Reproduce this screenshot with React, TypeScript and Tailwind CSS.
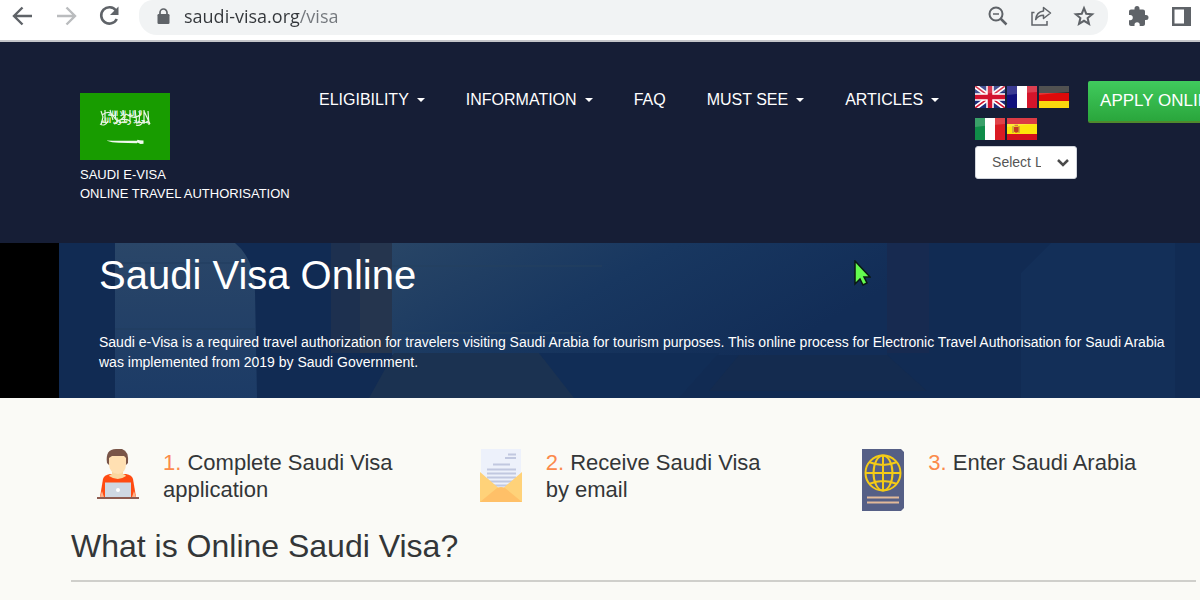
const navItems = [
  { label: 'ELIGIBILITY', menu: true },
  { label: 'INFORMATION', menu: true },
  { label: 'FAQ', menu: false },
  { label: 'MUST SEE', menu: true },
  { label: 'ARTICLES', menu: true }
]

const ArrowIcon = ({ flip = false }: { flip?: boolean }) => (
  <svg width="28" height="28" viewBox="0 0 28 28" fill="none" stroke="currentColor" strokeWidth="2.400">
    <path d={flip ? 'M5 14h17M14.500 5.500 23 14l-8.500 8.500' : 'M23 14H6M13.500 5.500 5 14l8.500 8.500'} />
  </svg>
)

const ReloadIcon = () => (
  <svg width="28" height="28" viewBox="0 0 28 28">
    <path d="M21 8.500A8.200 8.200 0 1 0 21.800 17" fill="none" stroke="currentColor" strokeWidth="2.600" />
    <path d="M23.500 4.500v8.500H15z" fill="currentColor" />
  </svg>
)

const LockIcon = () => (
  <svg width="17" height="17" viewBox="0 0 17 17" className="shrink-0">
    <path d="M5 7V4.500a3.500 3.500 0 0 1 7 0V7" fill="none" stroke="#5f6368" strokeWidth="1.700" />
    <rect x="2.500" y="6" width="12" height="10" rx="1.200" fill="#5f6368" />
  </svg>
)

const ZoomOutIcon = () => (
  <svg width="24" height="24" viewBox="0 0 24 24" fill="none" stroke="#5f6368">
    <circle cx="10" cy="10" r="6.500" strokeWidth="2" />
    <path d="M7 10h6" strokeWidth="1.500" />
    <path d="M14.500 14.500l6 6" strokeWidth="2.500" />
  </svg>
)

const ShareIcon = () => (
  <svg width="22" height="22" viewBox="0 0 22 22" fill="none" stroke="#5f6368" strokeWidth="1.500">
    <path d="M4.500 7.500H2V20h15v-4" />
    <path d="M13.500 2.500 20.500 8l-7 5.500v-3.200c-3.600 0-6 1.200-7.800 4.200.4-5 3.200-8 7.800-8.600z" strokeLinejoin="round" />
  </svg>
)

const StarIcon = () => (
  <svg width="24" height="24" viewBox="0 0 24 24" fill="none" stroke="#5f6368" strokeWidth="2">
    <path d="M12 4.200l2.200 5.500 6 .5-4.600 3.900 1.400 5.800-5-3.100-5 3.100 1.400-5.800-4.600-3.900 6-.5z" />
  </svg>
)

const PuzzleIcon = () => (
  <svg width="24" height="24" viewBox="0 0 24 24" fill="#5f6368">
    <path d="M20 11h-1V7.500c0-1.100-.9-2-2-2h-3.500V4.500a2.500 2.500 0 0 0-5 0v1H5c-1.100 0-2 .9-2 2V11h1.200a2.600 2.600 0 0 1 0 5.200H3V20c0 1.100.9 2 2 2h3.500v-1.200a2.600 2.600 0 0 1 5.200 0V22H17c1.100 0 2-.9 2-2v-4h1a2.500 2.500 0 0 0 0-5z" />
  </svg>
)

const PanelIcon = () => (
  <svg width="19" height="19" viewBox="0 0 19 19">
    <path d="M0 0h19v19H0z" fill="#5f6368" />
    <path d="M2.500 2.500h9.500v14H2.500z" fill="#fff" />
  </svg>
)

const Toolbar = () => (
  <div className="flex h-[42px] items-start border-b-2 border-[#c4c5ca] bg-white px-[9px] text-[#5f6368]">
    <div className="flex gap-[15px] pt-[2px]">
      <button aria-label="Back"><ArrowIcon /></button>
      <button aria-label="Forward" className="text-[#babcbe]"><ArrowIcon flip /></button>
      <button aria-label="Reload"><ReloadIcon /></button>
    </div>
    <div className="ml-4 flex h-[35px] flex-1 items-center rounded-b-[18px] rounded-t-[14px] bg-[#f1f3f4] pb-[3px] pl-4 pr-3">
      <LockIcon />
      <input
        aria-label="Address"
        className="ml-3 min-w-0 flex-1 bg-[linear-gradient(90deg,#33363a_116px,#73777c_116px)] bg-clip-text font-['Open_Sans',sans-serif] text-[18px] leading-6 text-transparent outline-none"
        defaultValue="saudi-visa.org/visa"
      />
      <div className="flex items-center gap-5">
        <button aria-label="Zoom out"><ZoomOutIcon /></button>
        <button aria-label="Share"><ShareIcon /></button>
        <button aria-label="Bookmark"><StarIcon /></button>
      </div>
    </div>
    <div className="ml-[18px] flex items-center gap-[22px] pt-1">
      <button aria-label="Extensions"><PuzzleIcon /></button>
      <button aria-label="Side panel"><PanelIcon /></button>
    </div>
  </div>
)

const SaudiFlag = () => (
  <svg width="90" height="67" viewBox="0 0 90 67" className="block">
    <path d="M0 0h90v67H0z" fill="#189c00" />
    <g fill="#fff" stroke="#fff" strokeWidth=".2" textAnchor="middle" fontFamily="DejaVu Sans, sans-serif" fontSize="7">
      <text x="45" y="23">لا إله إلا الله</text>
      <text x="45" y="30">محمد رسول الله</text>
    </g>
    <path
      d="M21 18l2 6-2 8M25 17v12M20 31q5 3 8-3M30 17l3 10M36 18q-2 7 2 11M43 17l2 13M50 17v12M55 17l2 14M60 17l-1 13M64 17v14M68 18l1 14M64 18l6 13M56 32q5 2 8-5M22 22q8-6 12 2t12-3M34 31q9-8 16-3M46 21q8 6 14 1"
      fill="none" stroke="#e6f6e2" strokeWidth="1.200"
    />
    <path d="M27 47.500l6 .2h24l.5-1 2 .6 4 .2v3.200l-3 .2-3-1.300-.5.700-18-.6c-5 0-9-.8-12-2z" fill="#f1f9ef" />
  </svg>
)

const Gloss = () => <path d="M0 0h30v6Q15 7 0 9z" fill="#fff" opacity=".18" />

const UkFlag = () => (
  <svg width="30" height="22" viewBox="0 0 30 22">
    <path d="M0 0h30v22H0z" fill="#1b2a78" />
    <path d="M0 0l30 22M30 0L0 22" stroke="#fff" strokeWidth="5" />
    <path d="M0 0l30 22M30 0L0 22" stroke="#d2122e" strokeWidth="1.600" />
    <path d="M15 0v22M0 11h30" stroke="#fff" strokeWidth="7.500" />
    <path d="M15 0v22M0 11h30" stroke="#d2122e" strokeWidth="4.500" />
    <Gloss />
  </svg>
)

const Tricolour = ({ colours }: { colours: string[] }) => (
  <svg width="30" height="22" viewBox="0 0 30 22">
    {colours.map((c, i) => (
      <rect key={c} x={i * 10} width="10" height="22" fill={c} />
    ))}
    <Gloss />
  </svg>
)

const GermanFlag = () => (
  <svg width="30" height="22" viewBox="0 0 30 22">
    <path d="M0 0h30v8H0z" fill="#2b2b2b" />
    <path d="M0 7h30v8H0z" fill="#dd0a0a" />
    <path d="M0 15h30v7H0z" fill="#fbd80e" />
    <Gloss />
  </svg>
)

const SpanishFlag = () => (
  <svg width="30" height="22" viewBox="0 0 30 22">
    <path d="M0 0h30v22H0z" fill="#d5101c" />
    <path d="M0 6h30v10H0z" fill="#fde50b" />
    <path d="M6 8v7M12 8v7" stroke="#b98a4c" strokeWidth="1.200" />
    <path d="M7 9h4.500v4.500q-2.200 2.500-4.500 0z" fill="#c33a25" />
    <path d="M7.500 7.500h3.500" stroke="#c8642a" strokeWidth="1.500" />
    <Gloss />
  </svg>
)

const languages = [
  { name: 'English', flag: <UkFlag /> },
  { name: 'French', flag: <Tricolour colours={['#10107c', '#ffffff', '#d5152b']} /> },
  { name: 'German', flag: <GermanFlag /> },
  { name: 'Italian', flag: <Tricolour colours={['#0f8c48', '#fffffe', '#da1b22']} /> },
  { name: 'Spanish', flag: <SpanishFlag /> }
]

const Header = () => (
  <header className="flex items-start overflow-hidden bg-[#161e36] pb-10 pl-20 pt-[39px] text-white">
    <a href="#home" className="mt-3 block w-[239px] shrink-0 text-[13px] leading-[19px]">
      <SaudiFlag />
      <span className="mt-[5px] block whitespace-nowrap">SAUDI E-VISA</span>
      <span className="block whitespace-nowrap">ONLINE TRAVEL AUTHORISATION</span>
    </a>
    <nav className="mt-[7px] flex shrink-0 gap-[41px]">
      {navItems.map((item) => (
        <a key={item.label} href="#menu" className="flex items-center gap-2 whitespace-nowrap text-base">
          {item.label}
          {item.menu && <span className="border-x-4 border-t-4 border-x-transparent border-t-white" />}
        </a>
      ))}
    </nav>
    <div className="ml-9 mt-[5px] w-[102px] shrink-0">
      <div className="flex flex-wrap gap-x-[2px] gap-y-[10px]">
        {languages.map((lang) => (
          <a key={lang.name} href="#language" aria-label={lang.name}>{lang.flag}</a>
        ))}
      </div>
      <div className="relative mt-[6px]">
        <select
          aria-label="Select Language"
          className="block h-[33px] w-full appearance-none rounded-[3px] border border-gray-300 bg-white pl-4 pr-[35px] text-[14px] text-[#555]"
        >
          <option>Select Language</option>
        </select>
        <svg className="pointer-events-none absolute right-2 top-3" width="12" height="10" viewBox="0 0 12 10">
          <path d="M1 2l5 5 5-5" fill="none" stroke="#4a4a4a" strokeWidth="2.500" />
        </svg>
      </div>
    </div>
    <button className="ml-[11px] h-[42px] shrink-0 whitespace-nowrap rounded-[2px] border-b-2 border-[#4f8a2c] bg-gradient-to-b from-[#40cb5d] to-[#2aa63c] px-3 text-[17px]">
      APPLY ONLINE
    </button>
  </header>
)

const HeroBackdrop = () => (
  <svg className="absolute inset-0 h-full w-full" viewBox="0 0 1141 155" preserveAspectRatio="none">
    <defs>
      <linearGradient id="stone" x1="0" y1="0" x2="0" y2="1">
        <stop offset="0" stopColor="#2a4668" />
        <stop offset="1" stopColor="#1c3b66" />
      </linearGradient>
      <linearGradient id="wall" x1="0" y1="0" x2="1" y2=".4">
        <stop offset="0" stopColor="#284566" />
        <stop offset=".5" stopColor="#183760" />
        <stop offset="1" stopColor="#122d57" />
      </linearGradient>
    </defs>
    <path d="M0 0h1141v155H0z" fill="#112b53" />
    <path d="M56 0h120q20 16 20 50l2 105H56z" fill="url(#stone)" />
    <path d="M56 86h140M56 20h132" stroke="#203c5e" />
    <path d="M272 0h60v110h-60z" fill="#1d304f" />
    <path d="M301 0h32v110h-32z" fill="#25354e" />
    <path d="M333 0h495v112H333z" fill="url(#wall)" />
    <path d="M333 23h210M333 90h190" stroke="#25405f" />
    <path d="M335 110h145l38 45H310z" fill="#1b3251" />
    <path d="M480 110h180l-40 45H515z" fill="#112d56" />
    <path d="M680 112h148l40 36H650z" fill="#142b4f" />
    <path d="M828 0h42v110h-42z" fill="#172a50" />
    <path d="M962 155V30l30-30h124v155z" fill="#132f58" />
  </svg>
)

const Hero = () => (
  <section className="flex bg-black pl-[59px] text-white">
    <div className="relative flex-1 overflow-hidden">
      <HeroBackdrop />
      <div className="relative pb-[26px] pl-10 pr-6 pt-2">
        <h1 className="text-[40px] leading-[48px]">Saudi Visa Online</h1>
        <p className="mt-[33px] text-[14px] leading-5">
          Saudi e-Visa is a required travel authorization for travelers visiting Saudi Arabia for tourism purposes. This online process for Electronic Travel Authorisation for Saudi Arabia was implemented from 2019 by Saudi Government.
        </p>
      </div>
      <svg className="absolute left-[795px] top-[17px]" width="17" height="26" viewBox="0 0 17 26">
        <path d="M1 1v23l5-5 3 6 4-2-3-6h6z" fill="#63fb4f" stroke="#0a1a12" strokeWidth="1.500" />
      </svg>
    </div>
  </section>
)

const PersonIcon = () => (
  <svg width="42" height="51" viewBox="0 0 42 51">
    <path d="M3 48 6 30q1-4 7-5h16q6 1 7 5l3 18z" fill="#ff4b12" />
    <path d="M3 48 5 42l2 6zM39 48l-2-6-2 6z" fill="#fdb28a" />
    <path d="M15 20h11v5q3 1 3 2-8 6-17 0 0-1 3-2z" fill="#fbd7a0" />
    <path d="M10 14Q8 0 19 0h6q7 2 6 14l-2 2H12z" fill="#795548" />
    <path d="M12 9l3-2h12l2 2v6q0 9-8 10-9-1-9-10z" fill="#ffe0b2" />
    <path d="M8 33.500h26V48H8z" fill="#cfd8e3" />
    <circle cx="21" cy="41" r="2" fill="#fff" />
    <path d="M0 48h42v2H0z" fill="#8d5b50" />
  </svg>
)

const MailIcon = () => (
  <svg width="42" height="54" viewBox="0 0 42 54">
    <path d="M1 0h40v50H1z" fill="#edf1fb" />
    <path d="M28 5.500h8M25 9h11M13 15.500h17M7 20.500h29M7 24.500h29M7 28.500h29M9 32.500h25M14 36.500h16" stroke="#c1c8e0" strokeWidth="2" />
    <path d="M0 23l21 18 21-18v30H0z" fill="#ffd279" />
    <path d="M0 53l17-14q4-2 8 0l17 14z" fill="#ffc068" />
  </svg>
)

const PassportIcon = () => (
  <svg width="42" height="62" viewBox="0 0 42 62">
    <path d="M0 0h39l3 3v56l-3 3H0z" fill="#555f86" />
    <g fill="none" stroke="#f5cb16" strokeWidth="2">
      <circle cx="21" cy="24" r="17.500" />
      <ellipse cx="21" cy="24" rx="9.500" ry="17.500" />
      <path d="M21 6.500v35M3.500 24h35M7 13q14 6 28 0M7 35q14-6 28 0" />
    </g>
    <path d="M5 48.500h32M5 53.500h32" stroke="#e2b999" strokeWidth="2" />
  </svg>
)

const steps = [
  { icon: PersonIcon, title: 'Complete Saudi Visa application' },
  { icon: MailIcon, title: 'Receive Saudi Visa by email' },
  { icon: PassportIcon, title: 'Enter Saudi Arabia' }
]

const Steps = () => (
  <section className="grid grid-cols-[17fr_17fr_15fr] pl-[97px] pt-[51px]">
    {steps.map((step, idx) => (
      <div key={step.title} className="flex items-start gap-6">
        <div className="shrink-0"><step.icon /></div>
        <h3 className="max-w-[240px] text-[22px] leading-[27px]">
          <span className="text-[#fb8a4b]">{`${idx + 1}.`}</span> {step.title}
        </h3>
      </div>
    ))}
  </section>
)

export default function App() {
  return (
    <div className="min-h-screen overflow-hidden bg-[#fafaf6] font-['Liberation_Sans',Arial,sans-serif] text-[#333638]">
      <Toolbar />
      <Header />
      <Hero />
      <main className="pb-4">
        <Steps />
        <h2 className="ml-[71px] mr-1 mt-[15px] border-b-2 border-[#cfcfcb] pb-[14px] text-[32px] leading-[40px]">
          What is Online Saudi Visa?
        </h2>
      </main>
    </div>
  )
}
